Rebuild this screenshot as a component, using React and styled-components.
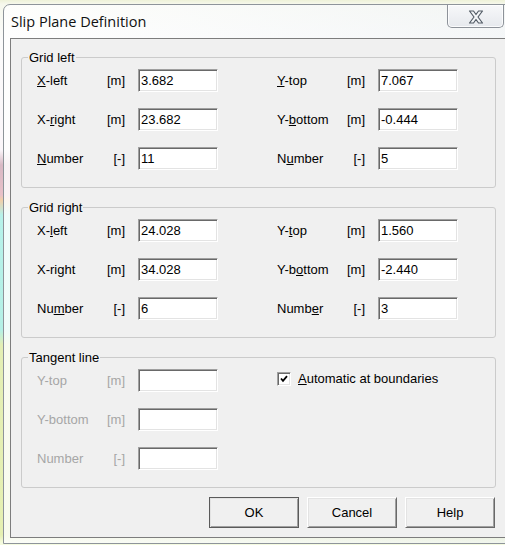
import React from 'react'
import styled, { createGlobalStyle } from 'styled-components';

const Global = createGlobalStyle`
  html, body {
    margin: 0;
    padding: 0;
    overflow: hidden;
  }
  body {
    font-family: "Liberation Sans", Arial, sans-serif;
  }
`

const Page = styled.div`
  width: 505px;
  height: 545px;
  overflow: hidden;
  box-sizing: border-box;
  padding: 4px 0 0 3px;
  background: linear-gradient(to bottom,
    #eef2d8 0px, #f6f8ec 4px, #fbfbfb 40px, #fbf6fa 150px,
    #d8b8c4 165px, #e9c0c8 195px, #f2cfa8 200px, #b6f2ea 215px,
    #b4f0e6 330px, #e4efb4 345px, #e6f0b2 535px, #f5fbe0 543px);
`

const Window = styled.div`
  width: 511px;
  box-sizing: border-box;
  border: 1px solid #8e949a;
  border-radius: 7px 7px 0 0;
  padding: 0 6px 5px 6px;
  background: linear-gradient(100deg, rgba(255,255,255,0.82) 0%, rgba(246,248,250,0.7) 60%, rgba(238,242,245,0.65) 100%);
`

const TitleBar = styled.div`
  height: 33px;
  display: flex;
  justify-content: space-between;
  align-items: flex-start;
`

const Title = styled.div`
  font-family: "Open Sans", "Noto Sans", sans-serif;
  font-size: 14.5px;
  line-height: 20px;
  color: #111;
  padding: 7px 0 0 1px;
`

const CloseButton = styled.div`
  width: 57px;
  height: 23px;
  margin-right: 3px;
  box-sizing: border-box;
  border: 1px solid #8d9299;
  border-top: none;
  border-radius: 0 0 5px 5px;
  background: linear-gradient(to bottom, #f7f8fa, #e6e9ed);
  box-shadow: inset 0 0 0 1px rgba(255,255,255,0.8);
  display: flex;
  align-items: center;
  justify-content: center;
  padding-top: 1px;
`

const Client = styled.div`
  border: 1px solid #7d7d7d;
  background: #f0f0f0;
  padding: 11px 10px 9px 10px;
  font-size: 13px;
  color: #000;
`

const Group = styled.fieldset`
  margin: 0 0 12px 0;
  border: 1px solid #cbcbcb;
  border-radius: 3px;
  padding: 4px 15px 17px 15px;
  display: flex;
  gap: 59px;
  min-width: 0;
`

const Legend = styled.legend`
  font-size: 13px;
  font-weight: normal;
  line-height: 15px;
  padding: 0 1px;
  margin-left: -9px;
  color: #000;
`

const Column = styled.div`
  width: 181px;
  display: flex;
  flex-direction: column;
  gap: 16px;
`

const Row = styled.div`
  height: 23px;
  display: flex;
  align-items: center;
  color: ${p => (p.$disabled ? '#a6a6a6' : '#000')};
`

const Label = styled.span`
  width: 62px;
  white-space: nowrap;
`

const Unit = styled.span`
  width: 26px;
  text-align: right;
`

const Input = styled.div`
  width: 80px;
  height: 23px;
  margin-left: 13px;
  box-sizing: border-box;
  border: 1px solid;
  border-color: #a0a0a0 #ffffff #ffffff #a0a0a0;
  box-shadow: inset 1px 1px 0 #696969, inset -1px -1px 0 #e3e3e3;
  background: #fff;
  padding: 0 2px;
  line-height: 21px;
  color: #000;
`

const Check = styled.span`
  width: 14px;
  height: 14px;
  box-sizing: border-box;
  border: 1px solid;
  border-color: #a0a0a0 #ffffff #ffffff #a0a0a0;
  box-shadow: inset 1px 1px 0 #696969, inset -1px -1px 0 #e3e3e3;
  background: #fff;
  display: flex;
  align-items: center;
  justify-content: center;
  margin-right: 7px;
`

const CheckRow = styled(Row)`
  margin-top: -2px;
  white-space: nowrap;
`

const ButtonRow = styled.div`
  display: flex;
  justify-content: flex-end;
  gap: 8px;
  margin-top: -3px;
  padding-right: 1px;
`

const Button = styled.div`
  width: 90px;
  height: 31px;
  box-sizing: border-box;
  border: 1px solid;
  border-color: #ffffff #696969 #696969 #ffffff;
  box-shadow: inset 1px 1px 0 #e3e3e3, inset -1px -1px 0 #a0a0a0;
  outline: ${p => (p.$default ? '1px solid #5a5a5a' : 'none')};
  outline-offset: -1px;
  background: #f0f0f0;
  display: flex;
  align-items: center;
  justify-content: center;
  font-size: 13px;
`

const mn = (text, i) =>
  i < 0 ? text : <>{text.slice(0, i)}<u>{text[i]}</u>{text.slice(i + 1)}</>

const groups = [
  {
    title: 'Grid left',
    left: [
      ['X-left', 0, '[m]', '3.682'],
      ['X-right', 2, '[m]', '23.682'],
      ['Number', 0, '[-]', '11'],
    ],
    right: [
      ['Y-top', 0, '[m]', '7.067'],
      ['Y-bottom', 2, '[m]', '-0.444'],
      ['Number', 1, '[-]', '5'],
    ],
  },
  {
    title: 'Grid right',
    left: [
      ['X-left', 2, '[m]', '24.028'],
      ['X-right', 4, '[m]', '34.028'],
      ['Number', 2, '[-]', '6'],
    ],
    right: [
      ['Y-top', 2, '[m]', '1.560'],
      ['Y-bottom', 3, '[m]', '-2.440'],
      ['Number', 4, '[-]', '3'],
    ],
  },
]

const tangent = [
  ['Y-top', -1, '[m]', ''],
  ['Y-bottom', -1, '[m]', ''],
  ['Number', -1, '[-]', ''],
]

const Fields = ({ rows, disabled }) => (
  <Column>
    {rows.map(([label, u, unit, value], i) => (
      <Row key={i} $disabled={disabled}>
        <Label>{mn(label, u)}</Label>
        <Unit>{unit}</Unit>
        <Input>{value}</Input>
      </Row>
    ))}
  </Column>
)

const CloseGlyph = () => (
  <svg width="16" height="14" viewBox="0 0 16 14">
    <polygon
      points="1.5,1 5.5,1 8,4.5 10.5,1 14.5,1 10,7 14.5,13 10.5,13 8,9.5 5.5,13 1.5,13 6,7"
      fill="#f4f6f8"
      stroke="#535c66"
      strokeWidth="1.2"
      strokeLinejoin="round"
    />
  </svg>
)

const App = () => {
  return <Page>
    <Global />
    <Window>
      <TitleBar>
        <Title>Slip Plane Definition</Title>
        <CloseButton><CloseGlyph /></CloseButton>
      </TitleBar>
      <Client>
        {groups.map(g => (
          <Group key={g.title}>
            <Legend>{g.title}</Legend>
            <Fields rows={g.left} />
            <Fields rows={g.right} />
          </Group>
        ))}
        <Group>
          <Legend>Tangent line</Legend>
          <Fields rows={tangent} disabled />
          <Column>
            <CheckRow>
              <Check>
                <svg width="8" height="8" viewBox="0 0 8 8">
                  <path d="M1 3.5 L3 5.8 L7 1.2" fill="none" stroke="#000" strokeWidth="1.8" />
                </svg>
              </Check>
              {mn('Automatic at boundaries', 0)}
            </CheckRow>
          </Column>
        </Group>
        <ButtonRow>
          <Button $default>OK</Button>
          <Button>Cancel</Button>
          <Button>Help</Button>
        </ButtonRow>
      </Client>
    </Window>
  </Page>;
};

export default App
